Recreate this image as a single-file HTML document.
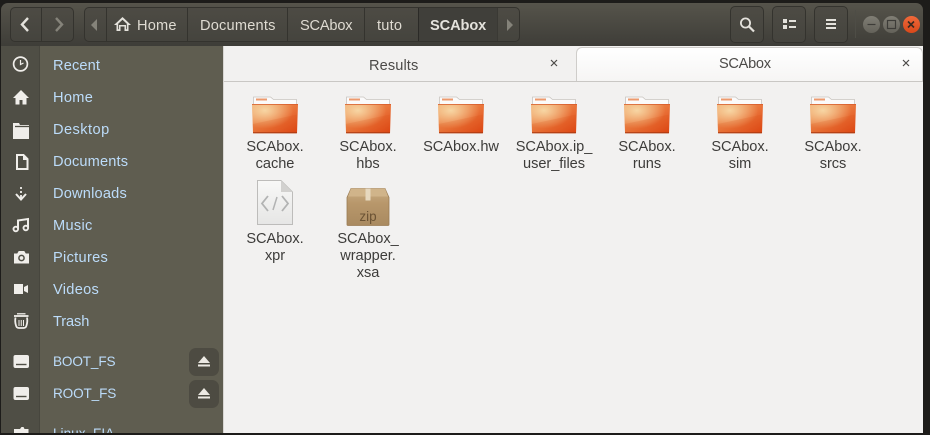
<!DOCTYPE html>
<html><head><meta charset="utf-8">
<style>
html,body{margin:0;padding:0;background:#1d1c1a;}
body{width:930px;height:435px;overflow:hidden;position:relative;font-family:"Liberation Sans",sans-serif;}
div,span,svg{position:absolute;}
#header{left:1px;top:3px;width:922px;height:43px;border-radius:7px 7px 0 0;background:linear-gradient(#56544b,#3e3d38);}
.t{white-space:nowrap;font-size:14.6px;line-height:18px;}
.b{border:1px solid #34332e;border-radius:5px;box-sizing:border-box;background:linear-gradient(#4d4b44,#45443e);}
.v{top:7px;width:1px;height:35px;background:#34332e;}
.c{top:17px;color:#dfdbd2;letter-spacing:.2px;}
#strip{left:1px;top:46px;width:39px;height:387px;background:#4f4e45;border-right:1px solid #47463e;box-sizing:border-box;}
#side{left:40px;top:46px;width:183px;height:387px;background:#5f5d50;}
.sl{left:53px;color:#bcdcfa;letter-spacing:.3px;}
#main{left:223px;top:46px;width:700px;height:387px;background:#f2f1f0;border-left:1px solid #d8d6d3;box-sizing:border-box;}
.lab{width:96px;text-align:center;color:#3d3c3a;font-size:14.6px;line-height:17px;letter-spacing:-.05px;}
.ej{left:189px;width:30px;height:28px;background:#4d4b42;border-radius:7px;}
</style></head>
<body>
<svg width="0" height="0" style="left:0;top:0">
<defs>
<linearGradient id="fo" x1="0" y1="0" x2="1" y2="1"><stop offset="0" stop-color="#f0a86a"/><stop offset=".55" stop-color="#e97238"/><stop offset="1" stop-color="#dd4413"/></linearGradient>
<radialGradient id="fg" cx=".28" cy=".22" r=".62"><stop offset="0" stop-color="#f7d6a4"/><stop offset="1" stop-color="#f6cf9a" stop-opacity="0"/></radialGradient>
<symbol id="folder" viewBox="0 0 46 38">
<path d="M1.500 1h17l3 2.500h23v6h-43z" fill="#fbfafa" stroke="#c9c5c0" stroke-width=".8"/>
<rect x="4" y="2.500" width="11" height="2" fill="#ec9a6e"/>
<path d="M0 8h46l-1 28.500q0 .8-1 .8H2q-1 0-1-.8z" fill="url(#fo)"/>
<path d="M0 8h46l-1 28.500q0 .8-1 .8H2q-1 0-1-.8z" fill="url(#fg)"/>
<path d="M.8 28L45.300 18.500V36.500q0 .8-1 .8H2q-1 0-1-.8z" fill="#d9470f" fill-opacity=".15"/>
<path d="M1 36.300h44v1H1z" fill="#a83a12"/>
<path d="M0 8h46v.8H0z" fill="#d65a2a"/>
</symbol>
</defs></svg>

<div id="header"></div>
<!-- nav buttons -->
<div class="b" style="left:10px;top:7px;width:64px;height:35px;"></div>
<div style="left:41px;top:8px;width:1px;height:33px;background:#34332e;"></div>
<svg style="left:10px;top:7px" width="64" height="35"><path d="M18 11l-6 6.500 6 6.500" fill="none" stroke="#e4e2dc" stroke-width="2.400"/><path d="M46 11l6 6.500-6 6.500" fill="none" stroke="#85837a" stroke-width="2.400"/></svg>
<!-- path bar -->
<div class="b" style="left:84px;top:7px;width:436px;height:35px;"></div>
<div class="v" style="left:106px"></div>
<div class="v" style="left:187px"></div>
<div class="v" style="left:287px"></div>
<div class="v" style="left:364px"></div>
<div style="left:418px;top:8px;width:80px;height:33px;background:#403f3a;border-left:1px solid #2b2a27;border-right:1px solid #3a3934;box-sizing:border-box;"></div>
<svg style="left:90px;top:18px" width="12" height="14"><path d="M7 1v12L1 7z" fill="#85837a"/></svg>
<svg style="left:505px;top:18px" width="12" height="14"><path d="M2 1v12l6-6z" fill="#85837a"/></svg>
<svg style="left:114px;top:16px" width="17" height="16"><path fill-rule="evenodd" d="M8.500 1L0 9h2.500v6h4v-4.500h4V15h4V9H17zM8.500 3.800L4.200 7.800v5.500h.8V9h7v4.300h.8V7.800z" fill="#e4e2dc"/></svg>
<span class="t c" style="left:137px;">Home</span>
<span class="t c" style="left:200px;">Documents</span>
<span class="t c" style="left:300px;letter-spacing:-.2px">SCAbox</span>
<span class="t c" style="left:377px;">tuto</span>
<span class="t c" style="left:430px;color:#e4e2dc;font-weight:bold;letter-spacing:-.1px">SCAbox</span>
<!-- right buttons -->
<div class="b" style="left:730px;top:6px;width:34px;height:37px;"></div>
<div class="b" style="left:772px;top:6px;width:34px;height:37px;"></div>
<div class="b" style="left:814px;top:6px;width:34px;height:37px;"></div>
<svg style="left:739px;top:16px" width="18" height="18"><circle cx="6.500" cy="7" r="4.600" fill="none" stroke="#e4e2dc" stroke-width="1.800"/><path d="M10 10.500l5 5" stroke="#e4e2dc" stroke-width="2.200"/></svg>
<svg style="left:782px;top:18px" width="16" height="12"><rect x="1" y="1" width="4" height="4" fill="#e4e2dc"/><rect x="1" y="7" width="4" height="4" fill="#e4e2dc"/><rect x="7" y="2" width="7" height="2" fill="#e4e2dc"/><rect x="7" y="8" width="7" height="2" fill="#e4e2dc"/></svg>
<svg style="left:825px;top:18px" width="12" height="12"><path d="M1 2h10M1 6h10M1 10h10" stroke="#e4e2dc" stroke-width="2"/></svg>
<div style="left:855px;top:10px;width:1px;height:28px;background:#4e4d46;"></div>
<div style="left:863px;top:16px;width:17px;height:17px;border-radius:50%;background:linear-gradient(#807e75,#64625a);"></div>
<div style="left:883px;top:16px;width:17px;height:17px;border-radius:50%;background:linear-gradient(#807e75,#64625a);"></div>
<div style="left:903px;top:16px;width:17px;height:17px;border-radius:50%;background:linear-gradient(#f0693a,#d9481a);"></div>
<svg style="left:863px;top:16px" width="57" height="17"><path d="M4.500 8.500h8" stroke="#3d3c38" stroke-width="1.200"/><rect x="24.500" y="4.500" width="8" height="8" fill="none" stroke="#3d3c38" stroke-width="1.200"/><path d="M45 5.500l6 6M51 5.500l-6 6" stroke="#3b2a20" stroke-width="1.600"/></svg>

<!-- sidebar -->
<div id="strip"></div>
<div id="side"></div>
<svg style="left:1px;top:46px" width="39" height="387" fill="#f0eeea">
<circle cx="19.500" cy="18" r="6.900" fill="none" stroke="#f0eeea" stroke-width="1.700"/><path d="M19.500 14v4.500l3-1.500" fill="none" stroke="#f0eeea" stroke-width="1.200"/>
<path fill-rule="evenodd" d="M20 44L12 52h2.500v6.500h4V54h3v4.500h4V52H28z"/>
<path d="M12 77h6l1 2h9v14H12z"/><path d="M14 80.500h14" stroke="#4f4e45" stroke-width="1.300"/>
<path d="M16 109h6.500l4 4v10h-10.500z" fill="none" stroke="#f0eeea" stroke-width="2"/><path d="M22 109v5h5z"/>
<path d="M20 141v2M20 145v2M20 149v4" stroke="#f0eeea" stroke-width="1.800"/><path d="M15 148l5 5.500 5-5.500" fill="none" stroke="#f0eeea" stroke-width="2"/>
<path d="M17 183v-8.500l10-1.500V181" fill="none" stroke="#f0eeea" stroke-width="2"/><circle cx="14.800" cy="183" r="2.300" fill="none" stroke="#f0eeea" stroke-width="1.900"/><circle cx="24.800" cy="182" r="2.300" fill="none" stroke="#f0eeea" stroke-width="1.900"/>
<path d="M13.500 208h3l1.500-2.500h5l1.500 2.500h3v9h-14z" stroke="#f0eeea"/><circle cx="20.500" cy="212" r="2.600" fill="none" stroke="#4f4e45" stroke-width="1.500"/>
<path d="M13 238h9v10h-9z"/><path d="M23 241l4-2v8l-4-2z"/>
<path d="M13 270h14.500" stroke="#f0eeea" stroke-width="1.800"/><path d="M14.500 271.500q-.8 4 .5 8q.5 2.500 3 2.500h4.500q2.500 0 3-2.500q1.300-4 .5-8" fill="none" stroke="#f0eeea" stroke-width="1.800"/><path d="M18 274v6M20.250 274v6M22.500 274v6" stroke="#f0eeea"/><path d="M16 267.800h8.500" stroke="#f0eeea" stroke-width="1.300"/>
<rect x="12.500" y="309" width="15.500" height="13" rx="2"/><path d="M15 318.500h10.500" stroke="#4f4e45" stroke-width="1.400"/>
<rect x="12.500" y="341" width="15.500" height="13" rx="2"/><path d="M15 350.500h10.500" stroke="#4f4e45" stroke-width="1.400"/>
<path d="M13 383h6l1.500-2h2l1 2h4v4H13z"/>
</svg>
<span class="t sl" style="top:57px;letter-spacing:.15px">Recent</span>
<span class="t sl" style="top:89px">Home</span>
<span class="t sl" style="top:121px;letter-spacing:.45px">Desktop</span>
<span class="t sl" style="top:153px;letter-spacing:.15px">Documents</span>
<span class="t sl" style="top:185px;letter-spacing:.2px">Downloads</span>
<span class="t sl" style="top:217px">Music</span>
<span class="t sl" style="top:249px">Pictures</span>
<span class="t sl" style="top:281px">Videos</span>
<span class="t sl" style="top:313px;letter-spacing:-.1px">Trash</span>
<span class="t sl" style="top:353px;font-size:13.6px;letter-spacing:-.15px">BOOT_FS</span>
<span class="t sl" style="top:385px;font-size:13.6px;letter-spacing:-.15px">ROOT_FS</span>
<div style="left:40px;top:425px;width:183px;height:8px;overflow:hidden"><span class="t sl" style="left:13px;top:0px;font-size:13.6px;letter-spacing:0">Linux_FIA</span></div>
<div class="ej" style="top:348px"></div>
<div class="ej" style="top:380px"></div>
<svg style="left:197px;top:355px" width="14" height="14"><path d="M7 1l6 7H1z" fill="#ece9e3"/><rect x="1" y="9.500" width="12" height="2" fill="#ece9e3"/></svg>
<svg style="left:197px;top:387px" width="14" height="14"><path d="M7 1l6 7H1z" fill="#ece9e3"/><rect x="1" y="9.500" width="12" height="2" fill="#ece9e3"/></svg>

<!-- main -->
<div id="main"></div>
<div style="left:224px;top:81px;width:699px;height:1px;background:#c9c7c4;"></div>
<div style="left:576px;top:47px;width:347px;height:34px;box-sizing:border-box;background:linear-gradient(#ffffff,#f6f5f4);border:1px solid #cfcdca;border-bottom:none;border-radius:6px 6px 0 0;"></div>
<span class="t" style="left:369px;top:57px;color:#4c4a48;letter-spacing:.1px;">Results</span>
<span class="t" style="left:719px;top:55px;color:#4c4a48;letter-spacing:-.3px;">SCAbox</span>
<svg style="left:550px;top:59px" width="8" height="8"><path d="M1 1l6 6M7 1l-6 6" stroke="#4c4a48" stroke-width="1.200"/></svg>
<svg style="left:902px;top:59px" width="8" height="8"><path d="M1 1l6 6M7 1l-6 6" stroke="#4c4a48" stroke-width="1.200"/></svg>

<svg style="left:252px;top:96px" width="46" height="38"><use href="#folder"/></svg>
<svg style="left:345px;top:96px" width="46" height="38"><use href="#folder"/></svg>
<svg style="left:438px;top:96px" width="46" height="38"><use href="#folder"/></svg>
<svg style="left:531px;top:96px" width="46" height="38"><use href="#folder"/></svg>
<svg style="left:624px;top:96px" width="46" height="38"><use href="#folder"/></svg>
<svg style="left:717px;top:96px" width="46" height="38"><use href="#folder"/></svg>
<svg style="left:810px;top:96px" width="46" height="38"><use href="#folder"/></svg>

<div class="lab" style="left:227px;top:139px">SCAbox.<br>cache</div>
<div class="lab" style="left:320px;top:139px">SCAbox.<br>hbs</div>
<div class="lab" style="left:413px;top:139px">SCAbox.hw</div>
<div class="lab" style="left:506px;top:139px">SCAbox.ip_<br>user_files</div>
<div class="lab" style="left:599px;top:139px">SCAbox.<br>runs</div>
<div class="lab" style="left:692px;top:139px">SCAbox.<br>sim</div>
<div class="lab" style="left:785px;top:139px">SCAbox.<br>srcs</div>
<div class="lab" style="left:227px;top:231px">SCAbox.<br>xpr</div>
<div class="lab" style="left:320px;top:231px">SCAbox_<br>wrapper.<br>xsa</div>

<svg style="left:256px;top:179px" width="38" height="47">
<defs><linearGradient id="pg" x1="0" y1="0" x2="0" y2="1"><stop offset="0" stop-color="#f8f8f7"/><stop offset="1" stop-color="#e6e6e5"/></linearGradient></defs>
<path d="M1.500 1.500H25L36.500 13v32.500h-35z" fill="url(#pg)" stroke="#bdbcba"/>
<path d="M25 1.500V13h11.500z" fill="#d2d1cf"/>
<path d="M12 17l-6 7.500 6 7.500M26 17l6 7.500-6 7.500" fill="none" stroke="#b2b3b3" stroke-width="1.800"/>
<path d="M21 18l-4 13" fill="none" stroke="#b2b3b3" stroke-width="1.500"/>
</svg>
<svg style="left:346px;top:187px" width="44" height="40">
<defs><linearGradient id="zg" x1="0" y1="0" x2="0" y2="1"><stop offset="0" stop-color="#c9ad83"/><stop offset=".4" stop-color="#b8976b"/><stop offset="1" stop-color="#a98a60"/></linearGradient></defs>
<path d="M5 1.500h34l4 9v27q0 1-1 1H2q-1 0-1-1v-27z" fill="url(#zg)" stroke="#9a7c54" stroke-width=".8"/>
<path d="M5 1.500h34l3 8H2z" fill="#d0b48a"/>
<rect x="19.500" y="1.500" width="5" height="12" fill="#e6d8bf"/>
<text x="22" y="34" text-anchor="middle" font-family="Liberation Sans,sans-serif" font-size="13.500" fill="#6b5334">zip</text>
</svg>
</body></html>
